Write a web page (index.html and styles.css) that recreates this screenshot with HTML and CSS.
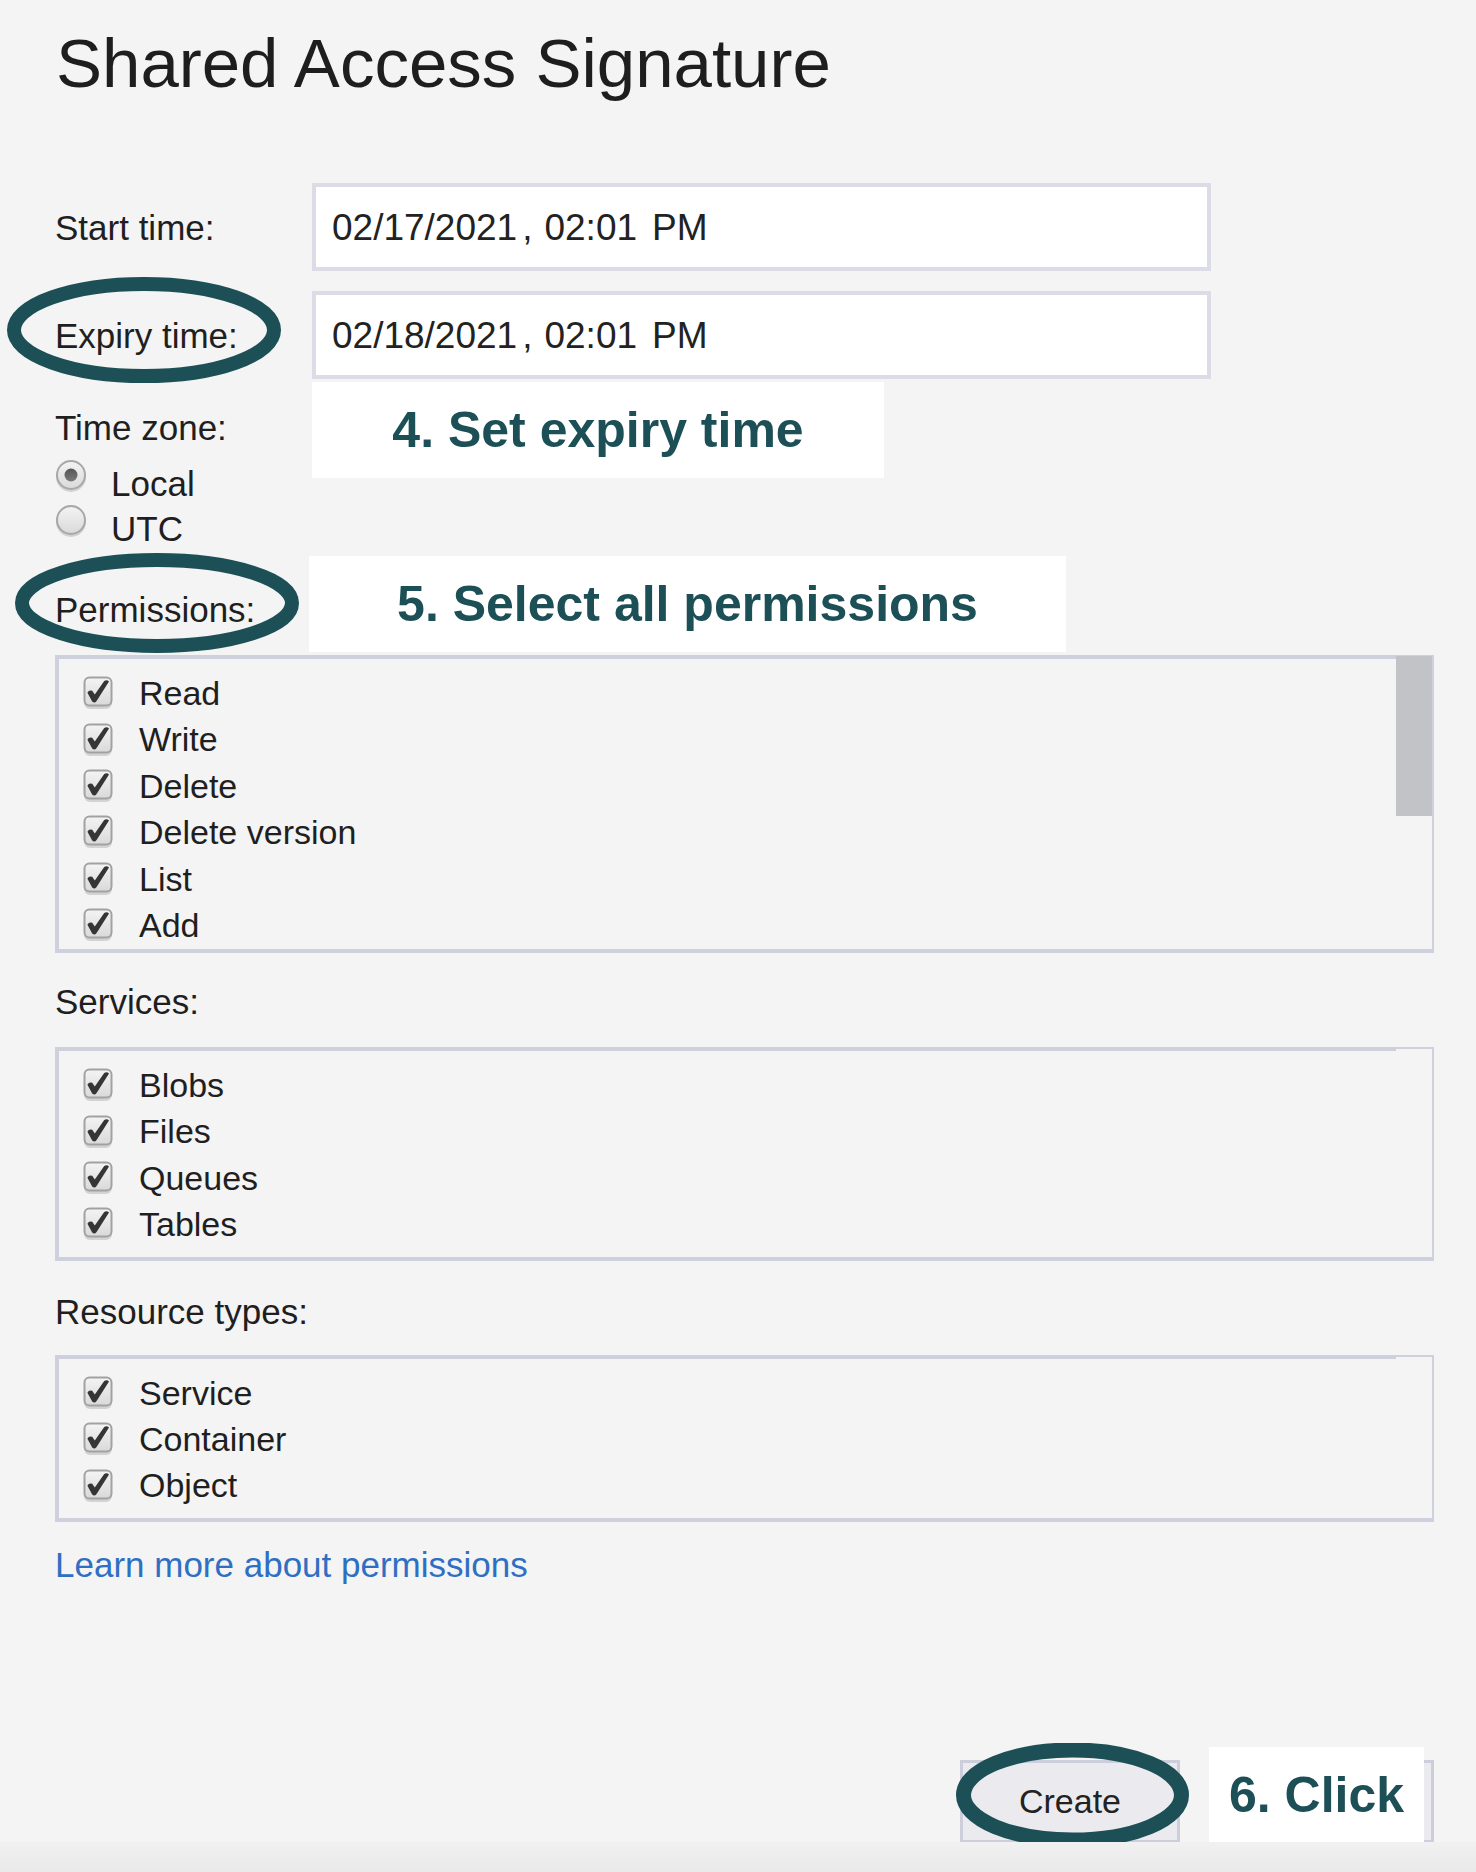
FILE: index.html
```html
<!DOCTYPE html>
<html lang="en">
<head>
<meta charset="utf-8">
<title>Shared Access Signature</title>
<link rel="stylesheet" href="styles.css">
</head>
<body>
<svg class="defs" width="0" height="0" aria-hidden="true">
  <defs>
    <linearGradient id="gBox" x1="0" y1="0" x2="0" y2="1">
      <stop offset="0" stop-color="#f4f4f4"/>
      <stop offset="1" stop-color="#d9d9d9"/>
    </linearGradient>
    <linearGradient id="gDot" x1="0" y1="0" x2="0" y2="1">
      <stop offset="0" stop-color="#555"/>
      <stop offset="1" stop-color="#7a7a7a"/>
    </linearGradient>
    <symbol id="cb" viewBox="0 0 32 34">
      <rect x="2" y="4" width="28" height="29" rx="6" fill="#d3d3d3"/>
      <rect x="2.5" y="1.5" width="27" height="28" rx="5" fill="url(#gBox)" stroke="#a2a2a2" stroke-width="2"/>
      <path d="M5.4 16.8 Q7 13.4 10.2 14.8 L12.8 18.4 L22.2 5 Q24.8 3.2 27 5.4 L14.6 25 Q12.4 27.8 10.2 25.4 Z" fill="#353535"/>
    </symbol>
    <symbol id="radioOn" viewBox="0 0 34 36">
      <circle cx="17" cy="19" r="15" fill="#d2d2d2"/>
      <circle cx="17" cy="17" r="14" fill="url(#gBox)" stroke="#a8a8a8" stroke-width="2"/>
      <circle cx="17" cy="17" r="6.5" fill="url(#gDot)"/>
    </symbol>
    <symbol id="radioOff" viewBox="0 0 34 36">
      <circle cx="17" cy="19" r="15" fill="#d2d2d2"/>
      <circle cx="17" cy="17" r="14" fill="url(#gBox)" stroke="#a8a8a8" stroke-width="2"/>
    </symbol>
  </defs>
</svg>

<div class="page">
  <h1 class="title">Shared Access Signature</h1>

  <div class="field-row first">
    <div class="field-label">Start time:</div>
    <div class="field-input"><span>02/17/2021</span><span class="dt-comma">,</span><span class="dt-time">02:01</span><span class="dt-ampm">PM</span></div>
  </div>

  <div class="field-row second">
    <svg class="ring ring-expiry" width="274" height="106" viewBox="0 0 274 106" aria-hidden="true">
      <ellipse cx="137" cy="53" rx="130" ry="46" fill="none" stroke="#1c5056" stroke-width="14"/>
    </svg>
    <div class="field-label">Expiry time:</div>
    <div class="field-input"><span>02/18/2021</span><span class="dt-comma">,</span><span class="dt-time">02:01</span><span class="dt-ampm">PM</span></div>
  </div>

  <div class="note-row tz-row">
    <div class="tz-block">
      <div class="line-label">Time zone:</div>
      <div class="radio-list">
        <div class="radio-item"><svg class="radio" width="34" height="36"><use href="#radioOn"/></svg><span>Local</span></div>
        <div class="radio-item"><svg class="radio" width="34" height="36"><use href="#radioOff"/></svg><span>UTC</span></div>
      </div>
    </div>
    <div class="note note-4">4. Set expiry time</div>
  </div>

  <div class="note-row perm-row">
    <svg class="ring ring-perm" width="284" height="100" viewBox="0 0 284 100" aria-hidden="true">
      <ellipse cx="142" cy="50" rx="135" ry="43" fill="none" stroke="#1c5056" stroke-width="14"/>
    </svg>
    <div class="perm-label"><div class="line-label">Permissions:</div></div>
    <div class="note note-5">5. Select all permissions</div>
  </div>

  <div class="cb-list perms">
    <div class="cb-scroll">
      <div class="cb-item"><svg class="cb" width="32" height="34"><use href="#cb"/></svg><span>Read</span></div>
      <div class="cb-item"><svg class="cb" width="32" height="34"><use href="#cb"/></svg><span>Write</span></div>
      <div class="cb-item"><svg class="cb" width="32" height="34"><use href="#cb"/></svg><span>Delete</span></div>
      <div class="cb-item"><svg class="cb" width="32" height="34"><use href="#cb"/></svg><span>Delete version</span></div>
      <div class="cb-item"><svg class="cb" width="32" height="34"><use href="#cb"/></svg><span>List</span></div>
      <div class="cb-item"><svg class="cb" width="32" height="34"><use href="#cb"/></svg><span>Add</span></div>
    </div>
    <div class="scroll-thumb"></div>
  </div>

  <div class="section-label">Services:</div>
  <div class="cb-list thin-top">
    <div class="cb-item"><svg class="cb" width="32" height="34"><use href="#cb"/></svg><span>Blobs</span></div>
    <div class="cb-item"><svg class="cb" width="32" height="34"><use href="#cb"/></svg><span>Files</span></div>
    <div class="cb-item"><svg class="cb" width="32" height="34"><use href="#cb"/></svg><span>Queues</span></div>
    <div class="cb-item"><svg class="cb" width="32" height="34"><use href="#cb"/></svg><span>Tables</span></div>
  </div>

  <div class="section-label resource">Resource types:</div>
  <div class="cb-list thin-top">
    <div class="cb-item"><svg class="cb" width="32" height="34"><use href="#cb"/></svg><span>Service</span></div>
    <div class="cb-item"><svg class="cb" width="32" height="34"><use href="#cb"/></svg><span>Container</span></div>
    <div class="cb-item"><svg class="cb" width="32" height="34"><use href="#cb"/></svg><span>Object</span></div>
  </div>

  <a class="learn" href="#">Learn more about permissions</a>

  <div class="button-row">
    <div class="btn-wrap">
      <button class="btn">Create</button>
      <svg class="ring ring-create" width="233" height="104" viewBox="0 0 233 104" aria-hidden="true">
        <ellipse cx="116.5" cy="52" rx="109" ry="45" fill="none" stroke="#1c5056" stroke-width="15"/>
      </svg>
    </div>
    <div class="btn-wrap">
      <button class="btn btn-cancel" aria-label="Cancel"></button>
      <div class="note note-6">6. Click</div>
    </div>
  </div>
</div>
<div class="footer-band"></div>
</body>
</html>
```

FILE: styles.css
```css
html, body {
  margin: 0;
  padding: 0;
  background: #f4f4f4;
}

body {
  font-family: "Liberation Sans", Arial, Helvetica, sans-serif;
  color: #1f1f1f;
  width: 1476px;
  min-height: 1872px;
  position: relative;
  overflow: hidden;
}

.defs {
  position: absolute;
  width: 0;
  height: 0;
}

.page {
  padding: 0 42px 0 55px;
}

.title {
  margin: 22px 0 0 1px;
  font-weight: normal;
  font-size: 69px;
  line-height: 84px;
  color: #1e1e1e;
  letter-spacing: 0;
}

/* date rows */
.field-row {
  display: flex;
  align-items: center;
  position: relative;
}

.field-row.first {
  margin-top: 77px;
}

.field-row.second {
  margin-top: 20px;
}

.field-label {
  width: 257px;
  flex: none;
  font-size: 35px;
  line-height: 45px;
}

.field-input {
  box-sizing: border-box;
  width: 899px;
  height: 88px;
  border: 4px solid #dcdce7;
  background: #fff;
  display: flex;
  align-items: center;
  padding-left: 16px;
  font-size: 37px;
  line-height: 45px;
  color: #222;
}

.dt-comma {
  margin-left: 5px;
}

.dt-time {
  margin-left: 12px;
}

.dt-ampm {
  margin-left: 15px;
}

/* annotation rings */
.ring {
  position: absolute;
  pointer-events: none;
}

.ring-expiry {
  left: -48px;
  top: -14px;
}

.ring-perm {
  left: -40px;
  top: -3px;
}

.ring-create {
  left: -4px;
  top: -17px;
}

/* note rows */
.note-row {
  display: flex;
  align-items: flex-start;
  position: relative;
}

.tz-row {
  margin-top: 3px;
}

.perm-row {
  margin-top: 5px;
}

.tz-block {
  width: 257px;
  flex: none;
  padding-top: 23px;
}

.perm-label {
  width: 257px;
  flex: none;
  padding-top: 31px;
}

.line-label {
  font-size: 35px;
  line-height: 45px;
}

.radio-list {
  margin-top: 11px;
}

.radio-item {
  display: flex;
  align-items: flex-start;
  height: 45px;
  font-size: 35px;
  line-height: 45px;
}

.radio {
  flex: none;
  margin: -3px 23px 0 -1px;
}

.note {
  background: #fff;
  color: #1c5056;
  font-weight: bold;
  font-size: 50px;
  height: 96px;
  line-height: 96px;
  text-align: center;
  box-sizing: border-box;
}

.note-4 {
  width: 572px;
}

.note-5 {
  width: 757px;
  margin-left: -3px;
}

/* checkbox lists */
.cb-list {
  box-sizing: border-box;
  border-style: solid;
  border-color: #cfd0de;
  border-width: 4px 2px 4px 4px;
  padding: 11px 0 9px 23px;
  position: relative;
  margin-left: 0;
}

.cb-list.perms {
  margin-top: 3px;
  height: 298px;
  padding: 0;
}

.cb-scroll {
  height: 100%;
  overflow: hidden;
  box-sizing: border-box;
  padding: 11px 0 0 23px;
}

.scroll-thumb {
  position: absolute;
  right: 0;
  top: -3px;
  width: 36px;
  height: 160px;
  background: #c2c3c7;
}

.cb-list.thin-top {
  border-top-width: 2px;
  padding-top: 13px;
  background: linear-gradient(#cfd0de, #cfd0de) no-repeat 0 0 / calc(100% - 36px) 2px;
}

.cb-item {
  display: flex;
  align-items: center;
  height: 46.4px;
  font-size: 34px;
  line-height: 46.4px;
}

.cb {
  flex: none;
  margin-right: 25px;
}

.section-label {
  font-size: 35px;
  line-height: 45px;
  margin-top: 26px;
  margin-bottom: 23px;
}

.section-label.resource {
  margin-top: 28px;
  margin-bottom: 21px;
}

.learn {
  display: block;
  margin-top: 20px;
  font-size: 35px;
  line-height: 45px;
  color: #2f6fc3;
  text-decoration: none;
  width: max-content;
}

/* buttons */
.button-row {
  display: flex;
  justify-content: flex-end;
  gap: 30px;
  margin-top: 173px;
}

.btn-wrap {
  position: relative;
}

.btn {
  box-sizing: border-box;
  height: 83px;
  width: 220px;
  border: 3px solid #cdcedb;
  background: #ebebef;
  font-family: "Liberation Sans", Arial, Helvetica, sans-serif;
  font-size: 34px;
  color: #222;
  padding: 0;
  margin: 0;
  display: block;
}

.btn-cancel {
  width: 224px;
}

.note-6 {
  position: absolute;
  left: -1px;
  top: -13px;
  width: 215px;
}

.footer-band {
  position: absolute;
  left: 0;
  right: 0;
  bottom: 0;
  height: 30px;
  background: linear-gradient(#f1f1f1, #e9e9e9);
}
```
